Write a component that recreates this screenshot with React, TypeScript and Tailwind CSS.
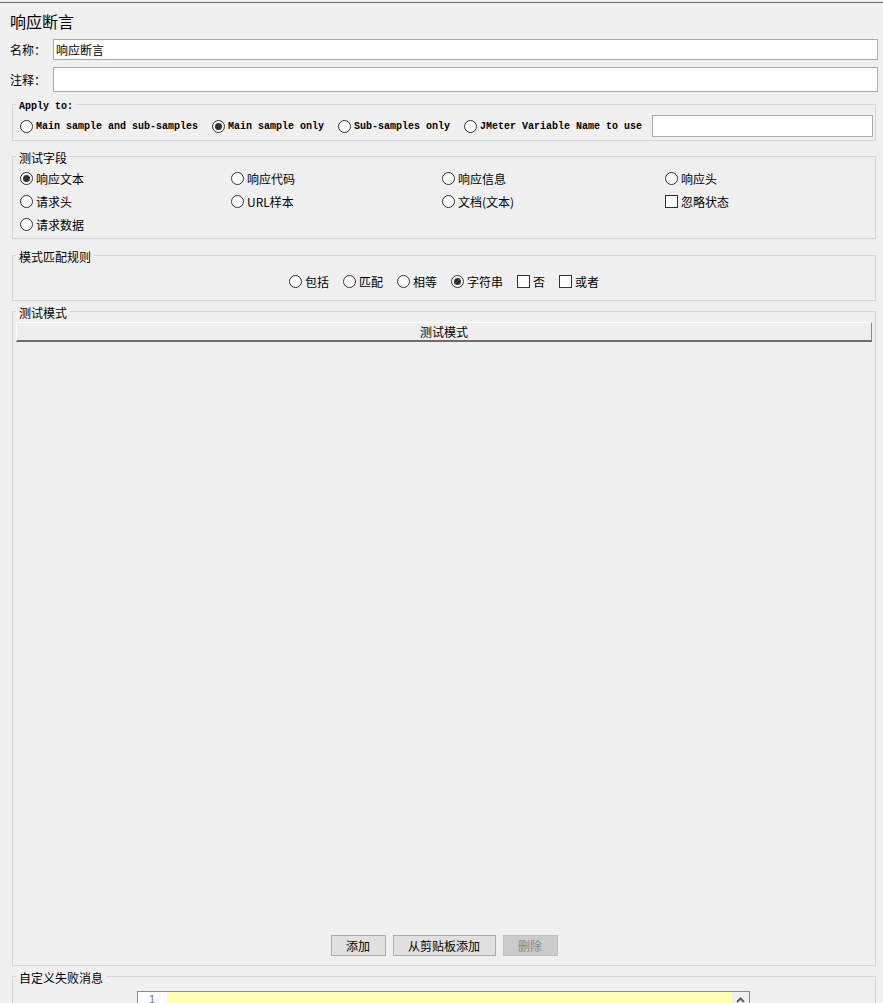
import type { ReactNode } from 'react'

function Radio({ checked }: { checked?: boolean }) {
  return (
    <svg width="13" height="13" viewBox="0 0 13 13" className="shrink-0">
      <circle cx="6.5" cy="6.5" r="6" fill="#fff" stroke="#333" />
      {checked && <circle cx="6.5" cy="6.5" r="3.5" fill="#333" />}
    </svg>
  )
}

function Check() {
  return <div className="w-[13px] h-[13px] shrink-0 border border-[#333] bg-white" />
}

function Option({
  label,
  checked,
  box,
  className = '',
  textClass = '',
}: {
  label: string
  checked?: boolean
  box?: boolean
  className?: string
  textClass?: string
}) {
  return (
    <div className={`flex items-center gap-[3px] whitespace-nowrap ${className}`}>
      {box ? <Check /> : <Radio checked={checked} />}
      <span className={textClass}>{label}</span>
    </div>
  )
}

function Group({ title, className = '', legendClass = '', children }: { title: string; className?: string; legendClass?: string; children: ReactNode }) {
  return (
    <fieldset className={`ml-[12px] mr-[7px] border border-[#d6d6d6] ${className}`}>
      <legend className={`ml-[3px] px-[3px] ${legendClass}`}>{title}</legend>
      {children}
    </fieldset>
  )
}

export default function App() {
  const mono = 'translate-y-[1px]'
  return (
    <div className="w-[883px] h-[1003px] overflow-hidden bg-[#f0f0f0] text-[12px] leading-[16px] text-black font-['Noto_Sans_CJK_SC','Liberation_Sans',sans-serif]">
      <div className="h-[2px]" />
      <div className="h-[1px] bg-[#6b6b6b]" />

      <div className="mt-[8px] px-[10px] text-[16px] leading-[20px]">响应断言</div>

      <div className="mt-[8px] flex items-center pl-[10px] pr-[5px]">
        <span className="w-[43px] shrink-0">名称：</span>
        <div className="flex-1 h-[21px] border border-[#a9a9a9] bg-white px-[2px] leading-[19px]">响应断言</div>
      </div>
      <div className="mt-[7px] flex items-center pl-[10px] pr-[5px]">
        <span className="w-[43px] shrink-0">注释：</span>
        <div className="flex-1 h-[25px] border border-[#a9a9a9] bg-white" />
      </div>

      <Group
        title="Apply to:"
        className="mt-[2px]"
        legendClass="pt-[6px] font-['Liberation_Mono',monospace] font-bold text-[10px] leading-[14px]"
      >
        <div className="flex items-center pt-[1px] pb-[3px] pl-[7px] pr-[2px] font-['Liberation_Mono',monospace] font-bold text-[10px]">
          <Option label="Main sample and sub-samples" className="mr-[14px]" textClass={mono} />
          <Option label="Main sample only" checked className="mr-[14px]" textClass={mono} />
          <Option label="Sub-samples only" className="mr-[14px]" textClass={mono} />
          <Option label="JMeter Variable Name to use" className="mr-[10px]" textClass={mono} />
          <div className="flex-1 h-[22px] border border-[#a9a9a9] bg-white" />
        </div>
      </Group>

      <Group title="测试字段" className="mt-[5px]" legendClass="pt-[4px] leading-[16px]">
        <div className="grid grid-cols-[211px_211px_223px_1fr] auto-rows-[23px] items-center pt-[1px] pb-[2px] pl-[7px]">
          <Option label="响应文本" checked />
          <Option label="响应代码" />
          <Option label="响应信息" />
          <Option label="响应头" />
          <Option label="请求头" />
          <Option label="URL样本" />
          <Option label="文档(文本)" />
          <Option label="忽略状态" box />
          <Option label="请求数据" />
        </div>
      </Group>

      <Group title="模式匹配规则" className="mt-[6px]" legendClass="pt-[4px] leading-[16px]">
        <div className="flex h-[23px] items-center justify-center gap-[14px] mt-[5px] mb-[7px]">
          <Option label="包括" />
          <Option label="匹配" />
          <Option label="相等" />
          <Option label="字符串" checked />
          <Option label="否" box />
          <Option label="或者" box />
        </div>
      </Group>

      <Group title="测试模式" legendClass="pt-[4px] leading-[16px]">
        <div className="px-[3px] pt-[1px]">
          <div className="h-[20px] bg-[#eeeeee] border-t border-l border-white border-b-2 border-b-[#6d6d6d] border-r border-r-[#8a8a8a] flex items-center justify-center">
            测试模式
          </div>
        </div>
        <div className="h-[593px]" />
        <div className="flex justify-center gap-[7px] pb-[9px]">
          <div className="w-[55px] h-[21px] flex items-center justify-center bg-[#e1e1e1] border border-[#adadad]">添加</div>
          <div className="w-[103px] h-[21px] flex items-center justify-center bg-[#e1e1e1] border border-[#adadad]">从剪贴板添加</div>
          <div className="w-[55px] h-[21px] flex items-center justify-center bg-[#cccccc] border border-[#bfbfbf] text-[#838383]">删除</div>
        </div>
      </Group>

      <Group title="自定义失败消息" legendClass="pt-[4px] leading-[16px]">
        <div className="flex justify-center pt-[5px] pr-[1px]">
          <div className="w-[613px] h-[100px] border border-[#8a8a8a] flex">
            <div className="w-[29px] bg-white pl-[11px] text-[11px] leading-[15px] text-[#6c7a94] font-['Liberation_Sans',sans-serif]">1</div>
            <div className="flex-1 bg-[#ffffb4]" />
            <div className="w-[17px] bg-[#f0f0f0] flex justify-center pt-[5px]">
              <svg width="9" height="6" viewBox="0 0 9 6">
                <path d="M1 5 L4.5 1.5 L8 5" fill="none" stroke="#606060" strokeWidth="2" />
              </svg>
            </div>
          </div>
        </div>
      </Group>
    </div>
  )
}
